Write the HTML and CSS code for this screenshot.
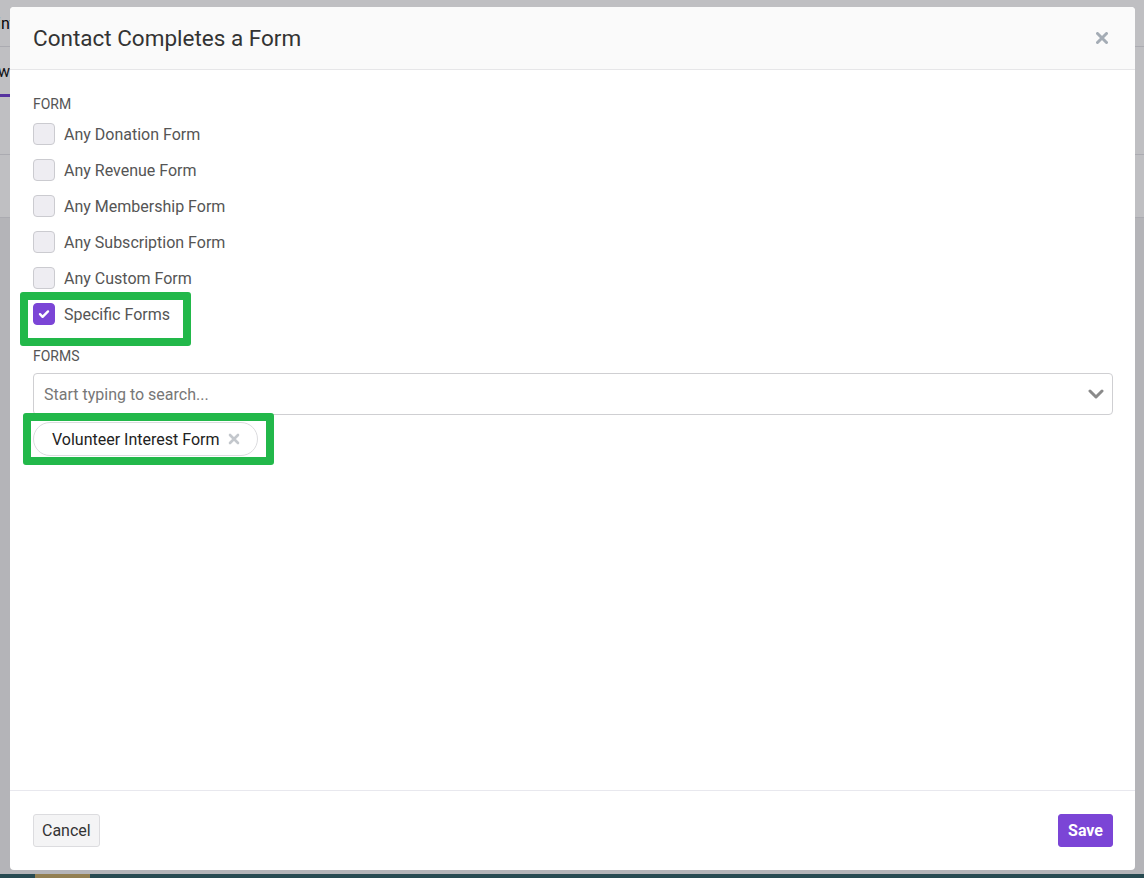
FILE: index.html
```html
<!DOCTYPE html>
<html lang="en">
<head>
  <meta charset="UTF-8">
  <meta name="viewport" content="width=device-width, initial-scale=1.0">
  <title>Automation - Contact Completes a Form</title>
  <link rel="stylesheet" href="styles.css">
</head>
<body>
  <!-- page underneath the dialog -->
  <div class="page">
    <div class="page-top"><span class="page-title">Point</span></div>
    <div class="page-tabs"><span class="tab active">New</span></div>
    <div class="page-row"></div>
    <div class="page-row"></div>
    <div class="page-fill"></div>
    <div class="page-bottom"><span class="bottom-chip"></span></div>
  </div>

  <div class="overlay">
    <div class="modal">
      <header class="modal-header">
        <h2>Contact Completes a Form</h2>
        <button class="close" type="button" aria-label="Close">
          <svg width="12" height="12" viewBox="0 0 12 12"><path d="M1.5 1.5l9 9M10.5 1.5l-9 9" stroke="#a4acb5" stroke-width="3" stroke-linecap="round"/></svg>
        </button>
      </header>

      <div class="modal-body">
        <div class="field-label">Form</div>
        <label class="check-row"><span class="box"></span>Any Donation Form</label>
        <label class="check-row"><span class="box"></span>Any Revenue Form</label>
        <label class="check-row"><span class="box"></span>Any Membership Form</label>
        <label class="check-row"><span class="box"></span>Any Subscription Form</label>
        <label class="check-row"><span class="box"></span>Any Custom Form</label>
        <label class="check-row marked marked-check">
          <span class="box checked">
            <svg width="12" height="10" viewBox="0 0 12 10"><path d="M2 5.2l2.6 2.6L10 2.4" fill="none" stroke="#fff" stroke-width="2.4" stroke-linecap="round" stroke-linejoin="round"/></svg>
          </span>Specific Forms
        </label>

        <div class="field-label forms-label">Forms</div>
        <div class="select">
          <span class="placeholder">Start typing to search...</span>
          <svg width="16" height="10" viewBox="0 0 16 10"><path d="M2 2l6 6 6-6" fill="none" stroke="#8a8a8a" stroke-width="3" stroke-linecap="round" stroke-linejoin="round"/></svg>
        </div>
        <div class="tags">
          <span class="tag marked marked-tag">Volunteer Interest Form
            <svg width="12" height="12" viewBox="0 0 12 12"><path d="M2 2l8 8M10 2l-8 8" stroke="#c3c7cc" stroke-width="2.6" stroke-linecap="round"/></svg>
          </span>
        </div>
      </div>

      <footer class="modal-footer">
        <button class="btn btn-default" type="button">Cancel</button>
        <button class="btn btn-primary" type="button">Save</button>
      </footer>
    </div>
  </div>
</body>
</html>
```

FILE: styles.css
```css
body {
  font-family: Roboto, "Liberation Sans", Arial, sans-serif;
  margin: 0;
  padding: 0;
  height: 878px;
  overflow: hidden;
  position: relative;
  background-color: #fff;
}

/* page behind the dialog */
.page {
  height: 878px;
  display: flex;
  flex-direction: column;
}
.page-top {
  height: 46px;
  border-bottom: 1px solid #e4e4e8;
  display: flex;
  align-items: center;
}
.page-title {
  margin-left: -22px;
  font-size: 16px;
  color: #000;
}
.page-tabs {
  height: 50px;
}
.tab {
  display: inline-block;
  margin-left: -22px;
  padding-top: 15px;
  padding-bottom: 13px;
  font-size: 16px;
  color: #111;
  border-bottom: 3px solid #7040d0;
}
.page-row {
  height: 57px;
  border-bottom: 1px solid #e4e4e8;
}
.page-row + .page-row {
  height: 62px;
}
.page-fill {
  flex: 1;
  background: #f0f0f2;
}
.page-bottom {
  height: 4px;
  background: #2f5f65;
}
.bottom-chip {
  display: block;
  margin-left: 35px;
  width: 55px;
  height: 4px;
  background: #c2a865;
}

/* dialog */
.overlay {
  position: absolute;
  inset: 0;
  background: rgba(20, 20, 30, 0.27);
  padding: 7px 9px 0 10px;
}
.modal {
  height: 863px;
  background: #fff;
  border-radius: 4px;
  display: flex;
  flex-direction: column;
  overflow: hidden;
  color: #555;
}
.modal-header {
  height: 62px;
  background: #fafafa;
  border-bottom: 1px solid #e6e6e8;
  display: flex;
  align-items: center;
  justify-content: space-between;
  padding: 0 27px 0 23px;
}
.modal-header h2 {
  margin: 0;
  font-size: 22.5px;
  font-weight: 400;
  color: #333;
}
.close {
  border: 0;
  background: none;
  padding: 0;
  display: flex;
  cursor: pointer;
}

.modal-body {
  flex: 1;
  padding: 26px 22px 0 23px;
}
.field-label {
  font-size: 14px;
  line-height: 16px;
  text-transform: uppercase;
  color: #555;
  margin-bottom: 4px;
}
.forms-label {
  margin-top: 16px;
  margin-bottom: 9px;
}
.check-row {
  height: 36px;
  display: flex;
  align-items: center;
  gap: 9px;
  font-size: 16px;
  color: #555;
}
.box {
  width: 20px;
  height: 20px;
  border: 1px solid #cbcbd0;
  border-radius: 4px;
  background: #eeedf2;
  display: flex;
  align-items: center;
  justify-content: center;
}
.box.checked {
  background: #7b45d6;
  border-color: #7b45d6;
}

.select {
  height: 40px;
  border: 1px solid #cfcfd2;
  border-radius: 4px;
  display: flex;
  align-items: center;
  justify-content: space-between;
  padding: 0 8px 0 10px;
}
.placeholder {
  font-size: 16px;
  color: #777;
}
.tags {
  margin-top: 7px;
  display: flex;
}
.tag {
  height: 32px;
  border: 1px solid #dcdcdf;
  border-radius: 17px;
  display: inline-flex;
  align-items: center;
  gap: 9px;
  padding: 0 17px 0 18px;
  font-size: 16px;
  color: #222;
}

/* green highlight frames */
.marked {
  position: relative;
}
.marked::after {
  content: "";
  position: absolute;
  border: 8px solid #22b84a;
  border-radius: 3px;
  pointer-events: none;
}
.marked-check::after {
  left: -13px;
  top: -4px;
  width: 155px;
  height: 38px;
}
.marked-tag::after {
  left: -11px;
  top: -10px;
  width: 235px;
  height: 36px;
}

.modal-footer {
  border-top: 1px solid #e8e8ee;
  padding: 23px 22px 23px 23px;
  display: flex;
  justify-content: space-between;
  align-items: center;
}
.btn {
  font-family: Roboto, "Liberation Sans", Arial, sans-serif;
  font-size: 16px;
  height: 33px;
  border-radius: 3px;
  cursor: pointer;
}
.btn-default {
  background: #f4f4f5;
  border: 1px solid #dcdcdf;
  color: #333;
  padding: 0 8px;
}
.btn-primary {
  background: #7b45d6;
  border: 1px solid #7b45d6;
  color: #fff;
  font-weight: 700;
  padding: 0 9px;
}
```
